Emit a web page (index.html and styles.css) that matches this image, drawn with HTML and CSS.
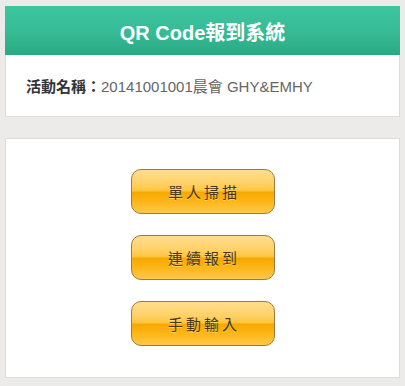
FILE: index.html
```html
<!DOCTYPE html>
<html lang="zh-Hant">
<head>
<meta charset="utf-8">
<title>QR Code報到系統</title>
<link rel="stylesheet" href="styles.css">
</head>
<body>
<div class="page">
  <section class="card">
    <header class="card-header">QR Code報到系統</header>
    <div class="info"><span class="label">活動名稱：</span><span class="value">20141001001晨會 GHY&amp;EMHY</span></div>
  </section>
  <section class="card actions">
    <button class="btn">單人掃描</button>
    <button class="btn">連續報到</button>
    <button class="btn">手動輸入</button>
  </section>
</div>
</body>
</html>
```

FILE: styles.css
```css
html, body {
  margin: 0;
  padding: 0;
  background: #edebea;
  font-family: "Liberation Sans", Arial, "Noto Sans CJK TC", sans-serif;
}
.page {
  padding: 6px 5px 0 5px;
  display: flex;
  flex-direction: column;
  gap: 21px;
}
.card {
  background: #fff;
  border: 1px solid #dedcdb;
}
.card-header {
  height: 48px;
  margin: -1px -1px 0 -1px;
  background: linear-gradient(to bottom, #3ec6a0 0%, #34b993 60%, #2aa983 100%);
  color: #fff;
  font-weight: bold;
  font-size: 20px;
  display: flex;
  align-items: center;
  justify-content: center;
  padding-top: 1px;
}
.info {
  height: 61px;
  display: flex;
  align-items: center;
  padding-left: 20px;
  font-size: 15px;
}
.label {
  color: #333;
  font-weight: bold;
  font-size: 15px;
}
.value {
  color: #666;
}
.actions {
  padding-top: 30px;
  padding-bottom: 31px;
  display: flex;
  flex-direction: column;
  align-items: center;
  gap: 21px;
}
.btn {
  width: 144px;
  height: 45px;
  border: 1px solid #9d7b3c;
  border-radius: 10px;
  background: linear-gradient(to bottom, #ffdd8e 0%, #ffd26a 30%, #ffc53e 48%, #f6a800 52%, #fcb412 70%, #ffc84a 100%);
  color: #45351a;
  font-family: "Liberation Sans", Arial, "Noto Sans CJK TC", sans-serif;
  font-size: 15px;
  letter-spacing: 3px;
  padding: 0 0 0 3px;
  cursor: pointer;
  text-shadow: 0 1px 0 rgba(255, 230, 160, 0.6);
}
```
